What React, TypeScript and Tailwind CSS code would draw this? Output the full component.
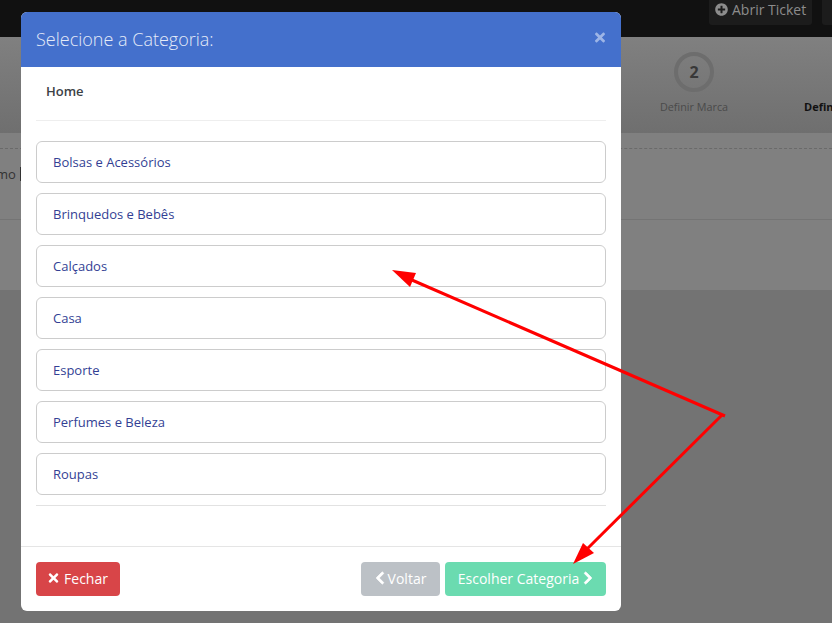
import React from 'react';
import { FaChevronLeft, FaChevronRight, FaPlusCircle, FaTimes } from 'react-icons/fa';

const categories = [
  'Bolsas e Acessórios',
  'Brinquedos e Bebês',
  'Calçados',
  'Casa',
  'Esporte',
  'Perfumes e Beleza',
  'Roupas',
];

const App = () => {
  return (
    <div className="relative h-[623px] overflow-hidden bg-[#737373] font-['Open_Sans',sans-serif]">
      {/* Top bar */}
      <div className="flex h-[37px] items-start justify-end gap-[10px] bg-[#111111]">
        <div className="flex h-[25px] w-[103px] items-center gap-[4px] rounded-b-[3px] bg-[#1c1c1c] pb-[7px] pl-[6px] text-[14px] text-[#8c8c8c]">
          <FaPlusCircle className="h-[13px] w-[13px] shrink-0" />
          <span>Abrir Ticket</span>
        </div>
        <div className="h-[25px] w-[10px] rounded-bl-[3px] bg-[#1c1c1c]" />
      </div>

      {/* Steps */}
      <div className="flex h-[96px] justify-end bg-gradient-to-b from-[#808080] to-[#6f6f6f]">
        <div className="flex w-[180px] flex-col items-center pt-[15px] pr-[40px]">
          <div className="flex h-[40px] w-[40px] items-center justify-center rounded-full border-[4px] border-[#6d6d6d] text-[16px] font-bold text-[#383838]">2</div>
          <span className="mt-[7px] text-[10.8px] leading-[16px] text-[#4a4a4a]">Definir Marca</span>
        </div>
        <div className="w-[28px] pt-[62px] text-[11px] leading-[16px] font-bold text-[#111111]">Defin</div>
      </div>

      {/* Panel behind */}
      <div className="h-[157px] bg-[#808080]">
        <div className="h-[16px] border-b border-dashed border-[#6a6a6a]" />
        <div className="flex h-[71px] items-start border-b border-[#747474] pt-[15px]">
          <span className="ml-[-4px] text-[13px] leading-[20px] text-[#333333]">mo</span>
          <span className="mt-[3px] ml-[4px] h-[14px] w-[2px] bg-[#333333]" />
        </div>
      </div>

      {/* Modal */}
      <div className="absolute top-[12px] left-[21px] flex h-[599px] w-[600px] flex-col overflow-hidden rounded-[6px] bg-white">
        <div className="flex h-[55px] shrink-0 items-center justify-between bg-[#4470cc] px-[15px]">
          <h4 className="text-[18px] font-light text-[#e4ebf8]">Selecione a Categoria:</h4>
          <FaTimes className="mr-[1px] mb-[4px] h-[15px] w-[10px] text-[#9db5e6]" />
        </div>

        <div className="flex-1 px-[15px]">
          <div className="flex h-[54px] items-center border-b border-[#eeeeee] pb-[3px] pl-[10px] text-[13px] font-semibold text-[#3c4146]">Home</div>
          <div className="mt-[20px] flex flex-col gap-[10px] border-b border-[#e2e2e2] pb-[10px]">
            {categories.map((category) => (
              <div key={category} className="flex h-[42px] items-center rounded-[6px] border border-[#cccccc] pt-[2px] pl-[16px] text-[13px] text-[#333f94]">
                {category}
              </div>
            ))}
          </div>
        </div>

        <div className="flex h-[65px] shrink-0 items-start justify-between border-t border-[#e5e5e5] px-[15px] pt-[15px]">
          <button className="flex h-[34px] w-[84px] items-center justify-center gap-[5px] rounded-[4px] bg-[#d84548] pb-[2px] text-[14px] text-white">
            <FaTimes className="h-[14px] w-[11px]" />
            Fechar
          </button>
          <div className="flex gap-[5px]">
            <button className="flex h-[34px] w-[79px] items-center justify-center gap-[3px] rounded-[4px] bg-[#bcc1c6] pb-[2px] text-[14px] text-white">
              <FaChevronLeft className="h-[14px] w-[10px]" stroke="currentColor" strokeWidth={30} />
              Voltar
            </button>
            <button className="flex h-[34px] w-[161px] items-center justify-center gap-[4px] rounded-[4px] bg-[#6bdbb0] pb-[2px] text-[14px] text-white">
              Escolher Categoria
              <FaChevronRight className="h-[14px] w-[10px]" stroke="currentColor" strokeWidth={30} />
            </button>
          </div>
        </div>
      </div>

      {/* Red annotation arrows */}
      <svg className="absolute inset-0" width="832" height="623" viewBox="0 0 832 623" fill="none">
        <path d="M725 416 L405 277" stroke="#ff0000" strokeWidth="3" />
        <path d="M392 270 L416 273 L410 287 Z" fill="#ff0000" />
        <path d="M722 415 L584 552" stroke="#ff0000" strokeWidth="3" />
        <path d="M573 564 L583 543 L594 553 Z" fill="#ff0000" />
      </svg>
    </div>
  );
};

export default App;
